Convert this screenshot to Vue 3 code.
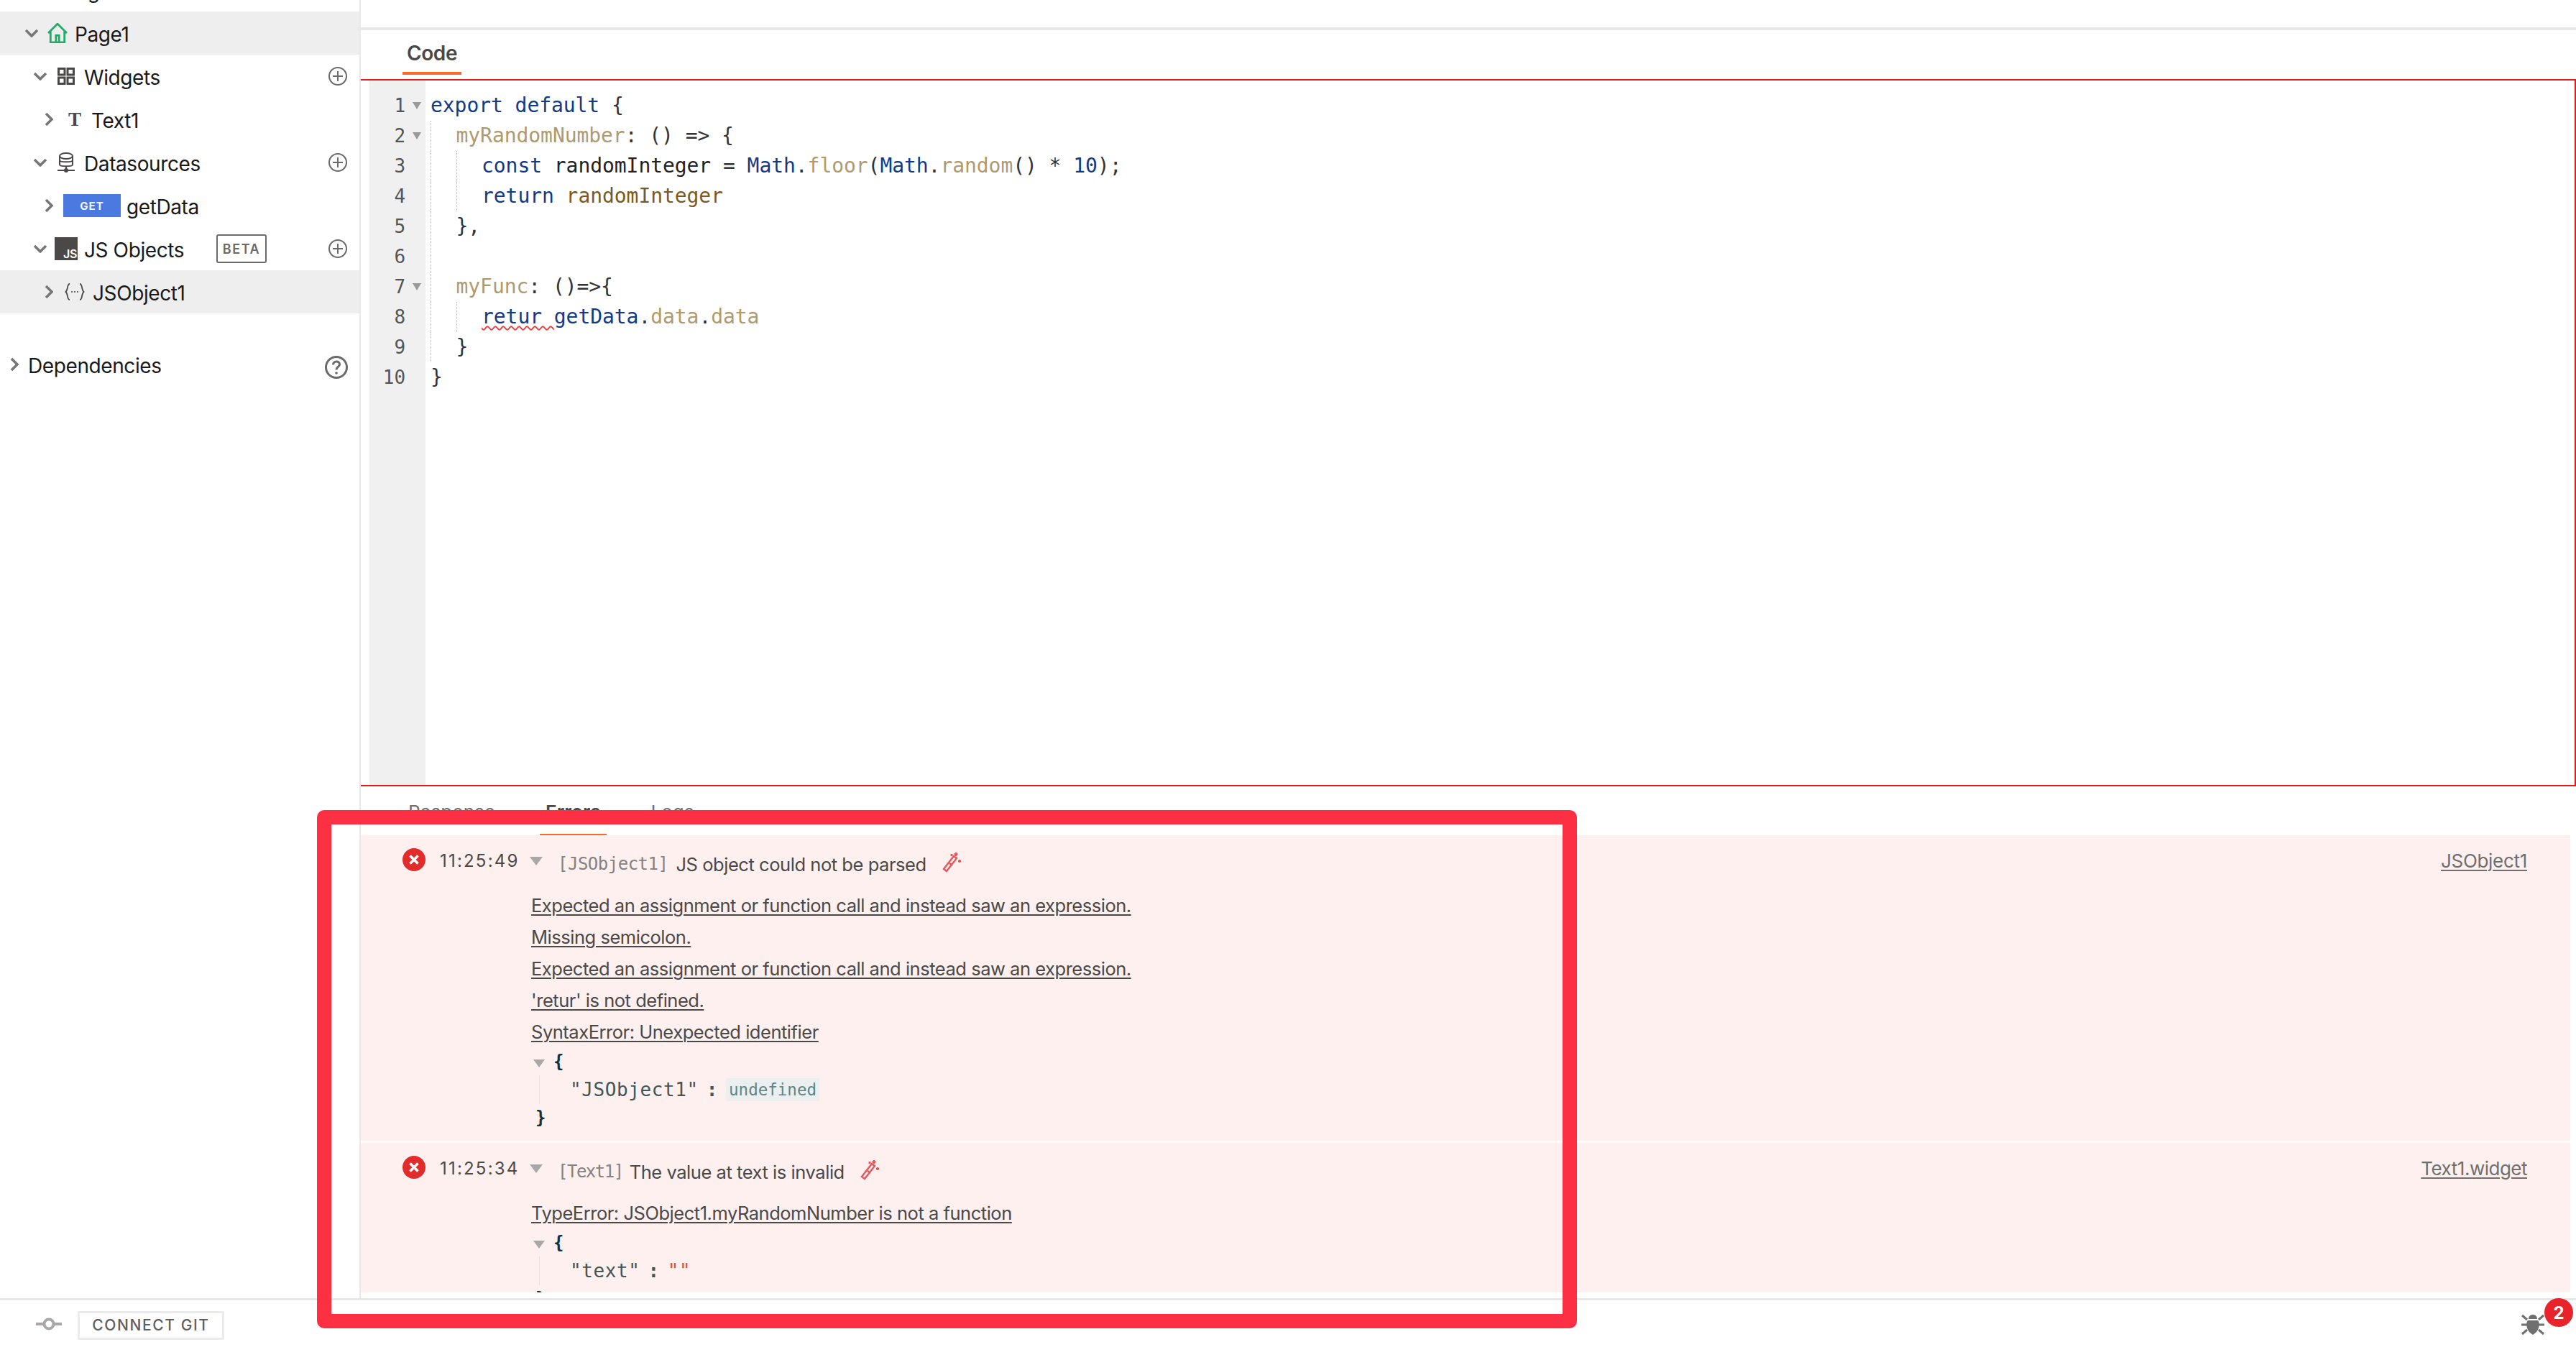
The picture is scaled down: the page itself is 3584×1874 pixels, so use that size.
<script setup>
const wandPath = 'M3 25 L17 7 L21 10 L7 28 Z M11 17 L15 20'
const code = [
  { n: 1, fold: true, indent: 0, t: [['k', 'export default'], ['p', ' {']] },
  { n: 2, fold: true, indent: 1, t: [['a', 'myRandomNumber'], ['p', ': () => {']] },
  { n: 3, indent: 2, t: [['k', 'const'], ['d', ' randomInteger'], ['p', ' = '], ['k', 'Math'], ['p', '.'], ['a', 'floor'], ['p', '('], ['k', 'Math'], ['p', '.'], ['a', 'random'], ['p', '() * '], ['k', '10'], ['p', ');']] },
  { n: 4, indent: 2, t: [['k', 'return'], ['b', ' randomInteger']] },
  { n: 5, indent: 1, t: [['p', '},']] },
  { n: 6, indent: 1, t: [] },
  { n: 7, fold: true, indent: 1, t: [['a', 'myFunc'], ['p', ': ()=>{']] },
  { n: 8, indent: 2, t: [['e', 'retur '], ['k', 'getData'], ['p', '.'], ['a', 'data'], ['p', '.'], ['a', 'data']] },
  { n: 9, indent: 1, t: [['p', '}']] },
  { n: 10, indent: 0, t: [['p', '}']] }
]
const firstMessages = [
  'Expected an assignment or function call and instead saw an expression.',
  'Missing semicolon.',
  'Expected an assignment or function call and instead saw an expression.',
  "'retur' is not defined.",
  'SyntaxError: Unexpected identifier'
]
</script>

<template>
  <div class="page">
    <div class="body">
      <aside class="side">
        <div class="clip-row"><span>Pages</span></div>
        <div class="row active lvl0">
          <svg class="chev" viewBox="0 0 20 12"><path d="M2 2 L10 10 L18 2" /></svg>
          <svg class="ic home" viewBox="0 0 26 26"><path d="M1 13 L13 1 L25 13 M4 11 V25 H22 V11 M11 25 V16 H15 V25" /></svg>
          <span class="gap-home">Page1</span>
        </div>
        <div class="row lvl1">
          <svg class="chev" viewBox="0 0 20 12"><path d="M2 2 L10 10 L18 2" /></svg>
          <svg class="ic" viewBox="0 0 24 24"><path class="sq" d="M1.5 1.5 H10 V10 H1.5 Z M14 1.5 H22.5 V10 H14 Z M1.5 14 H10 V22.5 H1.5 Z M14 14 H22.5 V22.5 H14 Z" /></svg>
          <span class="lbl">Widgets</span>
          <svg class="plus" viewBox="0 0 26 26"><circle cx="13" cy="13" r="12" /><path d="M13 6 V20 M6 13 H20" /></svg>
        </div>
        <div class="row lvl2">
          <svg class="chev-r" viewBox="0 0 12 20"><path d="M2 2 L10 10 L2 18" /></svg>
          <span class="t-ic">T</span>
          <span class="lbl">Text1</span>
        </div>
        <div class="row lvl1">
          <svg class="chev" viewBox="0 0 20 12"><path d="M2 2 L10 10 L18 2" /></svg>
          <svg class="ic ds" viewBox="0 0 24 28"><ellipse cx="12" cy="5" rx="9" ry="4" /><path d="M3 5 V17 C3 20 21 20 21 17 V5 M3 11 C3 14 21 14 21 11 M12 20 V23 M0 25 H24" /><circle cx="12" cy="25" r="2" /></svg>
          <span class="lbl">Datasources</span>
          <svg class="plus" viewBox="0 0 26 26"><circle cx="13" cy="13" r="12" /><path d="M13 6 V20 M6 13 H20" /></svg>
        </div>
        <div class="row lvl2">
          <svg class="chev-r" viewBox="0 0 12 20"><path d="M2 2 L10 10 L2 18" /></svg>
          <span class="get">GET</span>
          <span class="get-lbl">getData</span>
        </div>
        <div class="row lvl1">
          <svg class="chev" viewBox="0 0 20 12"><path d="M2 2 L10 10 L18 2" /></svg>
          <span class="js"><b>JS</b></span>
          <span class="js-lbl">JS Objects</span>
          <span class="beta">BETA</span>
          <svg class="plus" viewBox="0 0 26 26"><circle cx="13" cy="13" r="12" /><path d="M13 6 V20 M6 13 H20" /></svg>
        </div>
        <div class="row active lvl2">
          <svg class="chev-r" viewBox="0 0 12 20"><path d="M2 2 L10 10 L2 18" /></svg>
          <svg class="obj" viewBox="0 0 28 24"><path d="M7 1 C3 1 5 9 1.5 12 C5 15 3 23 7 23 M21 1 C25 1 23 9 26.5 12 C23 15 25 23 21 23" /><circle cx="10" cy="12" r="1.1" /><circle cx="14" cy="12" r="1.1" /><circle cx="18" cy="12" r="1.1" /></svg>
          <span class="lbl">JSObject1</span>
        </div>
        <div class="row deps">
          <svg class="chev-r" viewBox="0 0 12 20"><path d="M2 2 L10 10 L2 18" /></svg>
          <span class="dep-lbl">Dependencies</span>
          <svg class="help" viewBox="0 0 32 32"><circle cx="16" cy="16" r="14.5" /><path d="M11.5 12.5 C11.5 6.5 20.5 6.5 20.5 12 C20.5 15.5 16 15.5 16 19.5" /><circle class="dot" cx="16" cy="24" r="1.8" /></svg>
        </div>
      </aside>

      <main class="main">
        <div class="top-strip"></div>
        <div class="tabs code-tabs"><span class="tab on">Code</span></div>
        <section class="editor">
          <div class="gutter">
            <div v-for="l in code" :key="l.n" class="gline">
              <span class="num">{{ l.n }}</span>
              <span class="fold" :class="{ show: l.fold }"></span>
            </div>
          </div>
          <div class="code">
            <div v-for="l in code" :key="l.n" class="cline">
              <span v-for="i in l.indent" :key="i" class="indent"></span>
              <span v-for="(s, i) in l.t" :key="i" :class="s[0]">{{ s[1] }}</span>
            </div>
          </div>
        </section>
        <div class="tabs res-tabs">
          <span class="rtab">Response</span>
          <span class="rtab on">Errors</span>
          <span class="rtab">Logs</span>
        </div>
        <div class="errors">
          <article class="err first">
            <div class="head">
              <svg class="x" viewBox="0 0 32 32"><circle cx="16" cy="16" r="16" /><path d="M10.5 10.5 L21.5 21.5 M21.5 10.5 L10.5 21.5" /></svg>
              <span class="time">11:25:49</span>
              <span class="tri"></span>
              <span class="src">[JSObject1]</span>
              <span class="msg">JS object could not be parsed</span>
              <svg class="wand" viewBox="0 0 28 32"><path :d="wandPath" /><path d="M20 2 V7 M17.5 4.5 H22.5 M25 12 V16 M23 14 H27 M14 4 V7 M12.5 5.5 H15.5" /></svg>
              <a class="link">JSObject1</a>
            </div>
            <div class="msgs">
              <a v-for="(m, i) in firstMessages" :key="i">{{ m }}</a>
            </div>
            <div class="json">
              <div class="jopen"><span class="tri small"></span><span class="brace">{</span></div>
              <div class="jbody"><span class="jkey">"JSObject1"</span><span class="jcolon">:</span><span class="chip">undefined</span></div>
              <div class="brace close">}</div>
            </div>
          </article>
          <article class="err second">
            <div class="head">
              <svg class="x" viewBox="0 0 32 32"><circle cx="16" cy="16" r="16" /><path d="M10.5 10.5 L21.5 21.5 M21.5 10.5 L10.5 21.5" /></svg>
              <span class="time">11:25:34</span>
              <span class="tri"></span>
              <span class="src">[Text1]</span>
              <span class="msg">The value at text is invalid</span>
              <svg class="wand" viewBox="0 0 28 32"><path :d="wandPath" /><path d="M20 2 V7 M17.5 4.5 H22.5 M25 12 V16 M23 14 H27 M14 4 V7 M12.5 5.5 H15.5" /></svg>
              <a class="link">Text1.widget</a>
            </div>
            <div class="msgs"><a>TypeError: JSObject1.myRandomNumber is not a function</a></div>
            <div class="json">
              <div class="jopen"><span class="tri small"></span><span class="brace">{</span></div>
              <div class="jbody"><span class="jkey">"text"</span><span class="jcolon">:</span><span class="jstr">""</span></div>
              <div class="brace close">}</div>
            </div>
          </article>
        </div>
      </main>
    </div>

    <footer class="foot">
      <svg class="git" viewBox="0 0 36 20"><path d="M0 10 H10 M26 10 H36" /><circle cx="18" cy="10" r="6.5" /></svg>
      <button class="connect">CONNECT GIT</button>
      <div class="bug">
        <svg viewBox="0 0 32 30"><path class="body-bug" d="M9 9 H23 C26 12 26 24 16 29 C6 24 6 12 9 9 Z M10 7 C10 -1 22 -1 22 7 Z" /><path class="legs" d="M1 2 L8 8 M31 2 L24 8 M0 15 H32 M1 28 L8 22 M31 28 L24 22" /></svg>
        <span class="badge">2</span>
      </div>
    </footer>

    <div class="mark" aria-hidden="true"></div>
  </div>
</template>

<style>
html, body { margin: 0; background: #fff; }
</style>

<style scoped>
.page { position: relative; width: 3584px; height: 1874px; overflow: hidden; background: #fff; font-family: Inter, "Noto Sans", sans-serif; color: #191919; display: flex; flex-direction: column; }
.body { display: flex; height: 1806px; }
.side { width: 500px; flex: none; border-right: 2px solid #e9e9e9; font-size: 28px; letter-spacing: -.4px; }
.clip-row { height: 16px; overflow: hidden; display: flex; align-items: flex-end; padding-left: 89px; }
.clip-row span { line-height: 1; margin-bottom: 14px; }
.row { height: 60px; display: flex; align-items: center; position: relative; }
.row > span:not(.get):not(.js):not(.beta):not(.t-ic) { padding-top: 3px; }
.active { background: #eee; }
.lvl0 { padding-left: 34px; }
.lvl1 { padding-left: 46px; }
.lvl2 { padding-left: 62px; }
.chev { width: 20px; height: 12px; flex: none; fill: none; stroke: #777; stroke-width: 3.6; }
.chev-r { width: 12px; height: 20px; flex: none; fill: none; stroke: #777; stroke-width: 3.6; }
.ic { width: 24px; height: 24px; margin-left: 14px; flex: none; fill: none; stroke: #4b4848; stroke-width: 3; }
.ic.home { width: 28px; height: 28px; margin-left: 12px; stroke: #20ac68; stroke-width: 2.6; }
.gap-home { margin-left: 10px; }
.ic.ds { height: 28px; stroke-width: 2; }
.lbl { margin-left: 13px; }
.lvl2 .lbl { margin-left: 11px; }
.plus { position: absolute; left: 457px; width: 26px; height: 26px; fill: none; stroke: #6a6a6a; stroke-width: 2; }
.t-ic { width: 20px; margin-left: 20px; font: 700 27px/1 "Liberation Serif", serif; letter-spacing: 0; color: #4b4848; text-align: center; margin-right: 2px; }
.get { width: 80px; height: 32px; margin-left: 14px; background: #4a7ae0; color: #f3f6fd; font-size: 15px; font-weight: 700; letter-spacing: 1px; display: flex; align-items: center; justify-content: center; flex: none; }
.get-lbl { margin-left: 8px; }
.js { width: 32px; height: 32px; margin-left: 10px; background: #4b4848; color: #fff; position: relative; flex: none; }
.js b { position: absolute; right: 1px; bottom: 0; font-size: 16px; font-weight: 600; line-height: 18px; }
.js-lbl { margin-left: 9px; }
.beta { position: absolute; left: 301px; width: 70px; height: 40px; box-sizing: border-box; border: 2px solid #6a6a6a; border-radius: 3px; font-size: 18px; font-weight: 600; letter-spacing: 1.6px; color: #6a6a6a; display: flex; align-items: center; justify-content: center; }
.obj { width: 28px; height: 24px; margin-left: 16px; fill: #4b4848; flex: none; }
.obj path { fill: none; stroke: #4b4848; stroke-width: 1.8; }
.deps { margin-top: 41px; padding-left: 14px; }
.dep-lbl { margin-left: 13px; }
.help { position: absolute; left: 452px; top: 18px; width: 32px; height: 32px; fill: none; stroke: #6a6a6a; stroke-width: 3; }
.help .dot { fill: #6a6a6a; stroke: none; }
.main { flex: 1; min-width: 0; display: flex; flex-direction: column; }
.top-strip { height: 38px; border-bottom: 4px solid #e8e8e8; flex: none; }
.tabs { display: flex; flex: none; }
.code-tabs { height: 68px; padding-left: 58px; box-sizing: border-box; }
.tab { font-size: 28px; font-weight: 600; letter-spacing: -.4px; color: #4b4848; width: 82px; text-align: center; border-bottom: 4px solid #f86a2b; height: 62px; box-sizing: border-box; line-height: 64px; }
.editor { height: 984px; flex: none; box-sizing: border-box; border: 2px solid #e01b1b; border-left: none; padding-left: 12px; display: flex; font: 28px/42px "DejaVu Sans Mono", "Liberation Mono", monospace; letter-spacing: -.06px; }
.gutter { width: 78px; flex: none; background: #f0f0f0; padding-top: 14px; box-sizing: border-box; color: #555; font-size: 26px; }
.gline { height: 42px; display: flex; align-items: center; padding-left: 8px; }
.num { width: 42px; text-align: right; }
.fold { width: 0; height: 0; margin-left: 10px; border: 6px solid transparent; border-top: 10px solid #999; border-bottom: 0; visibility: hidden; }
.fold.show { visibility: visible; }
.code { padding: 14px 0 0 7px; white-space: pre; }
.cline { height: 42px; display: flex; }
.indent { width: 35.5px; flex: none; border-left: 1px dotted #bbb; box-sizing: border-box; }
.k { color: #123a86; }
.a { color: #b09a6c; }
.p { color: #333; }
.d { color: #222; }
.b { color: #7a5a22; }
.e { color: #123a86; text-decoration: underline wavy #ef3b3b 2px; text-underline-offset: 3px; }
.res-tabs { height: 68px; padding-left: 66px; gap: 70px; font-size: 26px; box-sizing: border-box; line-height: 72px; }
.rtab { color: #716e6e; height: 68px; position: relative; }
.rtab.on { color: #4b4848; font-weight: 600; }
.rtab.on::after { content: ""; position: absolute; left: -8px; right: -8px; bottom: -2px; height: 4px; background: #f86a2b; }
.errors { height: 636px; margin-right: 8px; overflow: hidden; flex: none; display: flex; flex-direction: column; gap: 3px; }
.err { background: #fdf0ef; flex: none; position: relative; box-sizing: border-box; padding-left: 58px; }
.err.first { height: 425px; padding-top: 18px; }
.err.second { height: 208px; padding-top: 18px; overflow: hidden; }
.head { height: 32px; display: flex; align-items: center; }
.x { width: 32px; height: 32px; flex: none; }
.x circle { fill: #e22c2c; }
.x path { stroke: #fff; stroke-width: 3.6; fill: none; }
.time { margin-left: 20px; font-size: 24px; letter-spacing: 2.2px; color: #4b4848; width: 113px; flex: none; white-space: nowrap; position: relative; top: 1px; }
.tri { width: 0; height: 0; border: 9px solid transparent; border-top: 12px solid #a9a7a7; border-bottom: 0; margin-left: 12px; flex: none; margin-top: 4px; }
.src { margin-left: 21px; font: 24px "DejaVu Sans Mono", monospace; letter-spacing: -.5px; color: #858282; position: relative; top: 6px; }
.second .src { letter-spacing: -1.5px; }
.msg { margin-left: 11px; font-size: 25.5px; letter-spacing: -.45px; color: #4b4848; position: relative; top: 6px; }
.second .msg { margin-left: 9px; }
.wand { width: 28px; height: 32px; margin-left: 21px; fill: none; stroke: #e8575c; stroke-width: 2.4; position: relative; top: 4px; flex: none; }
.link { position: absolute; right: 60px; top: 20px; font-size: 26px; letter-spacing: -.3px; color: #716e6e; text-decoration: underline; text-underline-offset: 3px; text-decoration-thickness: 2px; }
.second .link { letter-spacing: -.5px; }
.msgs { padding: 26px 0 0 179px; display: flex; flex-direction: column; }
.msgs a { height: 44px; line-height: 44px; font-size: 25.5px; letter-spacing: -.47px; color: #4b4848; text-decoration: underline; text-decoration-thickness: 2px; text-underline-offset: 3px; }
.json { padding-left: 179px; font: 26px/38px "DejaVu Sans Mono", monospace; color: #1f3b4d; }
.jopen { display: flex; align-items: center; height: 38px; }
.tri.small { border-width: 8px; border-top-width: 11px; border-bottom: 0; margin-left: 3px; }
.brace { margin-left: 12px; font-weight: 700; color: #14313f; font-size: 24px; }
.jbody { border-left: 1px solid #eee2e2; margin-left: 11px; padding-left: 42px; height: 40px; display: flex; align-items: center; letter-spacing: .6px; color: #455; }
.jcolon { margin: 0 11px; font-weight: 700; }
.chip { background: #ecefef; color: #5f8587; font-size: 22.5px; padding: 0 4px; height: 32px; line-height: 32px; border-radius: 2px; letter-spacing: 0; }
.jstr { color: #e8502a; }
.close { margin-left: 0; padding-left: 6px; height: 42px; line-height: 38px; }
.foot { height: 68px; border-top: 3px solid #e8e8e8; box-sizing: border-box; display: flex; align-items: center; padding-left: 50px; position: relative; flex: none; }
.git { width: 36px; height: 20px; fill: #fff; stroke: #a9a7a7; stroke-width: 4; flex: none; }
.connect { margin-left: 22px; width: 204px; height: 40px; box-sizing: border-box; background: #fff; border: 3px solid #ebebeb; font: 500 21px Inter, sans-serif; letter-spacing: 1.6px; color: #5e5e5e; padding: 0; margin-top: 4px; }
.bug { position: absolute; left: 3508px; top: 19px; width: 32px; height: 30px; }
.bug svg { width: 32px; height: 30px; display: block; }
.body-bug { fill: #6f6f6f; }
.legs { stroke: #6f6f6f; stroke-width: 3; fill: none; }
.badge { position: absolute; left: 32px; top: -22px; width: 40px; height: 40px; border-radius: 50%; background: #e8232b; color: #fff; font-size: 24px; font-weight: 700; display: flex; align-items: center; justify-content: center; }
.mark { position: absolute; left: 441px; top: 1127px; width: 1753px; height: 721px; box-sizing: border-box; border: 20px solid #fd3043; border-radius: 10px; pointer-events: none; }
</style>
